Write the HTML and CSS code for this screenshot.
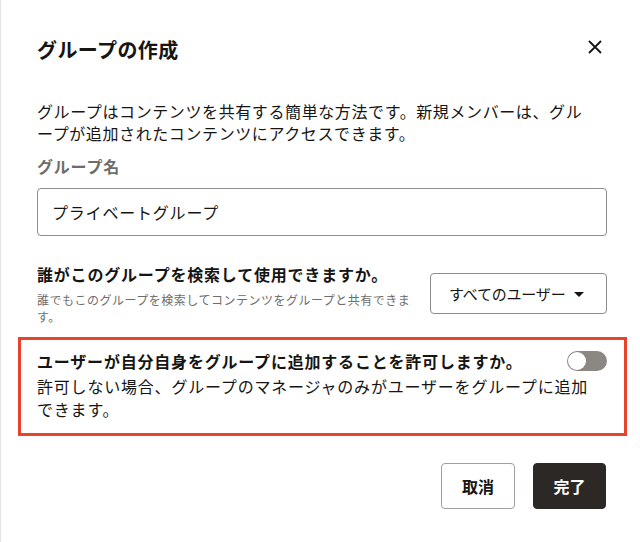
FILE: index.html
```html
<!DOCTYPE html>
<html lang="ja">
<head>
    <meta charset="UTF-8">
    <meta name="viewport" content="width=device-width, initial-scale=1.0">
    <title>グループの作成</title>
    <link rel="stylesheet" href="styles.css">
</head>
<body>
    <div class="dialog">
        <div class="dialog-header">
            <h1>グループの作成</h1>
            <button class="close-btn" aria-label="閉じる">
                <svg width="14" height="14" viewBox="0 0 14 14">
                    <path d="M1 1 L13 13 M13 1 L1 13" stroke="#161513" stroke-width="1.8" fill="none"/>
                </svg>
            </button>
        </div>

        <p class="description">
            グループはコンテンツを共有する簡単な方法です。新規メンバーは、グループが追加されたコンテンツにアクセスできます。
        </p>

        <label class="field-label" for="groupName">グループ名</label>
        <input class="text-input" type="text" id="groupName" value="プライベートグループ">

        <div class="visibility-row">
            <div class="visibility-text">
                <div class="question">誰がこのグループを検索して使用できますか。</div>
                <div class="hint">誰でもこのグループを検索してコンテンツをグループと共有できます。</div>
            </div>
            <div class="select-box">
                <span class="select-value">すべてのユーザー</span>
                <span class="caret"></span>
            </div>
        </div>

        <div class="self-add">
            <div class="self-add-head">
                <div class="question">ユーザーが自分自身をグループに追加することを許可しますか。</div>
                <div class="toggle"><span class="knob"></span></div>
            </div>
            <p class="self-add-desc">許可しない場合、グループのマネージャのみがユーザーをグループに追加できます。</p>
        </div>

        <div class="dialog-footer">
            <button class="btn btn-cancel">取消</button>
            <button class="btn btn-done">完了</button>
        </div>
    </div>
</body>
</html>
```

FILE: styles.css
```css
body {
    margin: 0;
    padding: 0;
    background: #ffffff;
    font-family: "Noto Sans CJK JP", "Noto Sans", sans-serif;
    color: #161513;
    line-break: loose;
}

.dialog {
    height: 542px;
    box-sizing: border-box;
    padding: 36px 33px 0 36px;
    border-left: 1px solid #e4e4e4;
}

.dialog-header {
    display: flex;
    justify-content: space-between;
    align-items: center;
}

h1 {
    margin: 0;
    font-size: 20px;
    line-height: 28px;
    font-weight: bold;
    letter-spacing: 0.4px;
}

.close-btn {
    width: 24px;
    height: 24px;
    padding: 0;
    margin-top: -6px;
    border: none;
    background: none;
    display: flex;
    align-items: center;
    justify-content: center;
}

.description {
    margin: 36px 0 0;
    max-width: 560px;
    font-size: 16px;
    line-height: 22px;
    letter-spacing: 0.6px;
}

.field-label {
    display: block;
    margin-top: 11px;
    font-size: 16px;
    line-height: 22px;
    font-weight: bold;
    color: #6f6d6b;
    letter-spacing: 0.8px;
}

.text-input {
    display: block;
    box-sizing: border-box;
    width: 100%;
    height: 48px;
    margin-top: 11px;
    padding: 0 14px;
    border: 1px solid #8f8c89;
    border-radius: 4px;
    font-family: inherit;
    font-size: 16px;
    letter-spacing: 0.8px;
    color: #161513;
}

.visibility-row {
    display: flex;
    align-items: flex-start;
    gap: 13px;
    margin-top: 27px;
}

.visibility-text {
    flex: 1;
}

.question {
    font-size: 16px;
    line-height: 22px;
    font-weight: bold;
    letter-spacing: 0.8px;
}

.hint {
    margin-top: 6px;
    font-size: 12px;
    line-height: 17px;
    color: #6f6d6b;
    letter-spacing: 0.5px;
}

.select-box {
    width: 177px;
    height: 41px;
    box-sizing: border-box;
    margin-top: 10px;
    padding: 0 22px 0 18px;
    border: 1px solid #8f8c89;
    border-radius: 4px;
    display: flex;
    align-items: center;
    justify-content: space-between;
}

.select-value {
    font-size: 15px;
    white-space: nowrap;
    letter-spacing: -0.2px;
}

.caret {
    width: 0;
    height: 0;
    margin-top: 2px;
    border-left: 5px solid transparent;
    border-right: 5px solid transparent;
    border-top: 5px solid #161513;
}

.self-add {
    margin: 12px -20px 0 -19px;
    padding: 10px 17px 12px 16px;
    border: 3px solid #e8432d;
}

.self-add-head {
    display: flex;
    justify-content: space-between;
    align-items: center;
}

.toggle {
    width: 40px;
    height: 20px;
    box-sizing: border-box;
    border-radius: 10px;
    background: #8b8783;
    padding: 1px;
}

.knob {
    display: block;
    width: 18px;
    height: 18px;
    border-radius: 50%;
    background: #ffffff;
}

.self-add-desc {
    margin: 3px 0 0;
    max-width: 560px;
    font-size: 16px;
    line-height: 23px;
    letter-spacing: 0.8px;
}

.dialog-footer {
    display: flex;
    justify-content: flex-end;
    gap: 18px;
    margin-top: 27px;
    padding-right: 1px;
}

.btn {
    height: 46px;
    width: 74px;
    border-radius: 4px;
    font-family: inherit;
    font-size: 16px;
    font-weight: bold;
    cursor: pointer;
}

.btn-cancel {
    background: #ffffff;
    border: 1px solid #a19e9b;
    color: #161513;
}

.btn-done {
    width: 73px;
    background: #2b2826;
    border: 1px solid #2b2826;
    color: #ffffff;
}
```
